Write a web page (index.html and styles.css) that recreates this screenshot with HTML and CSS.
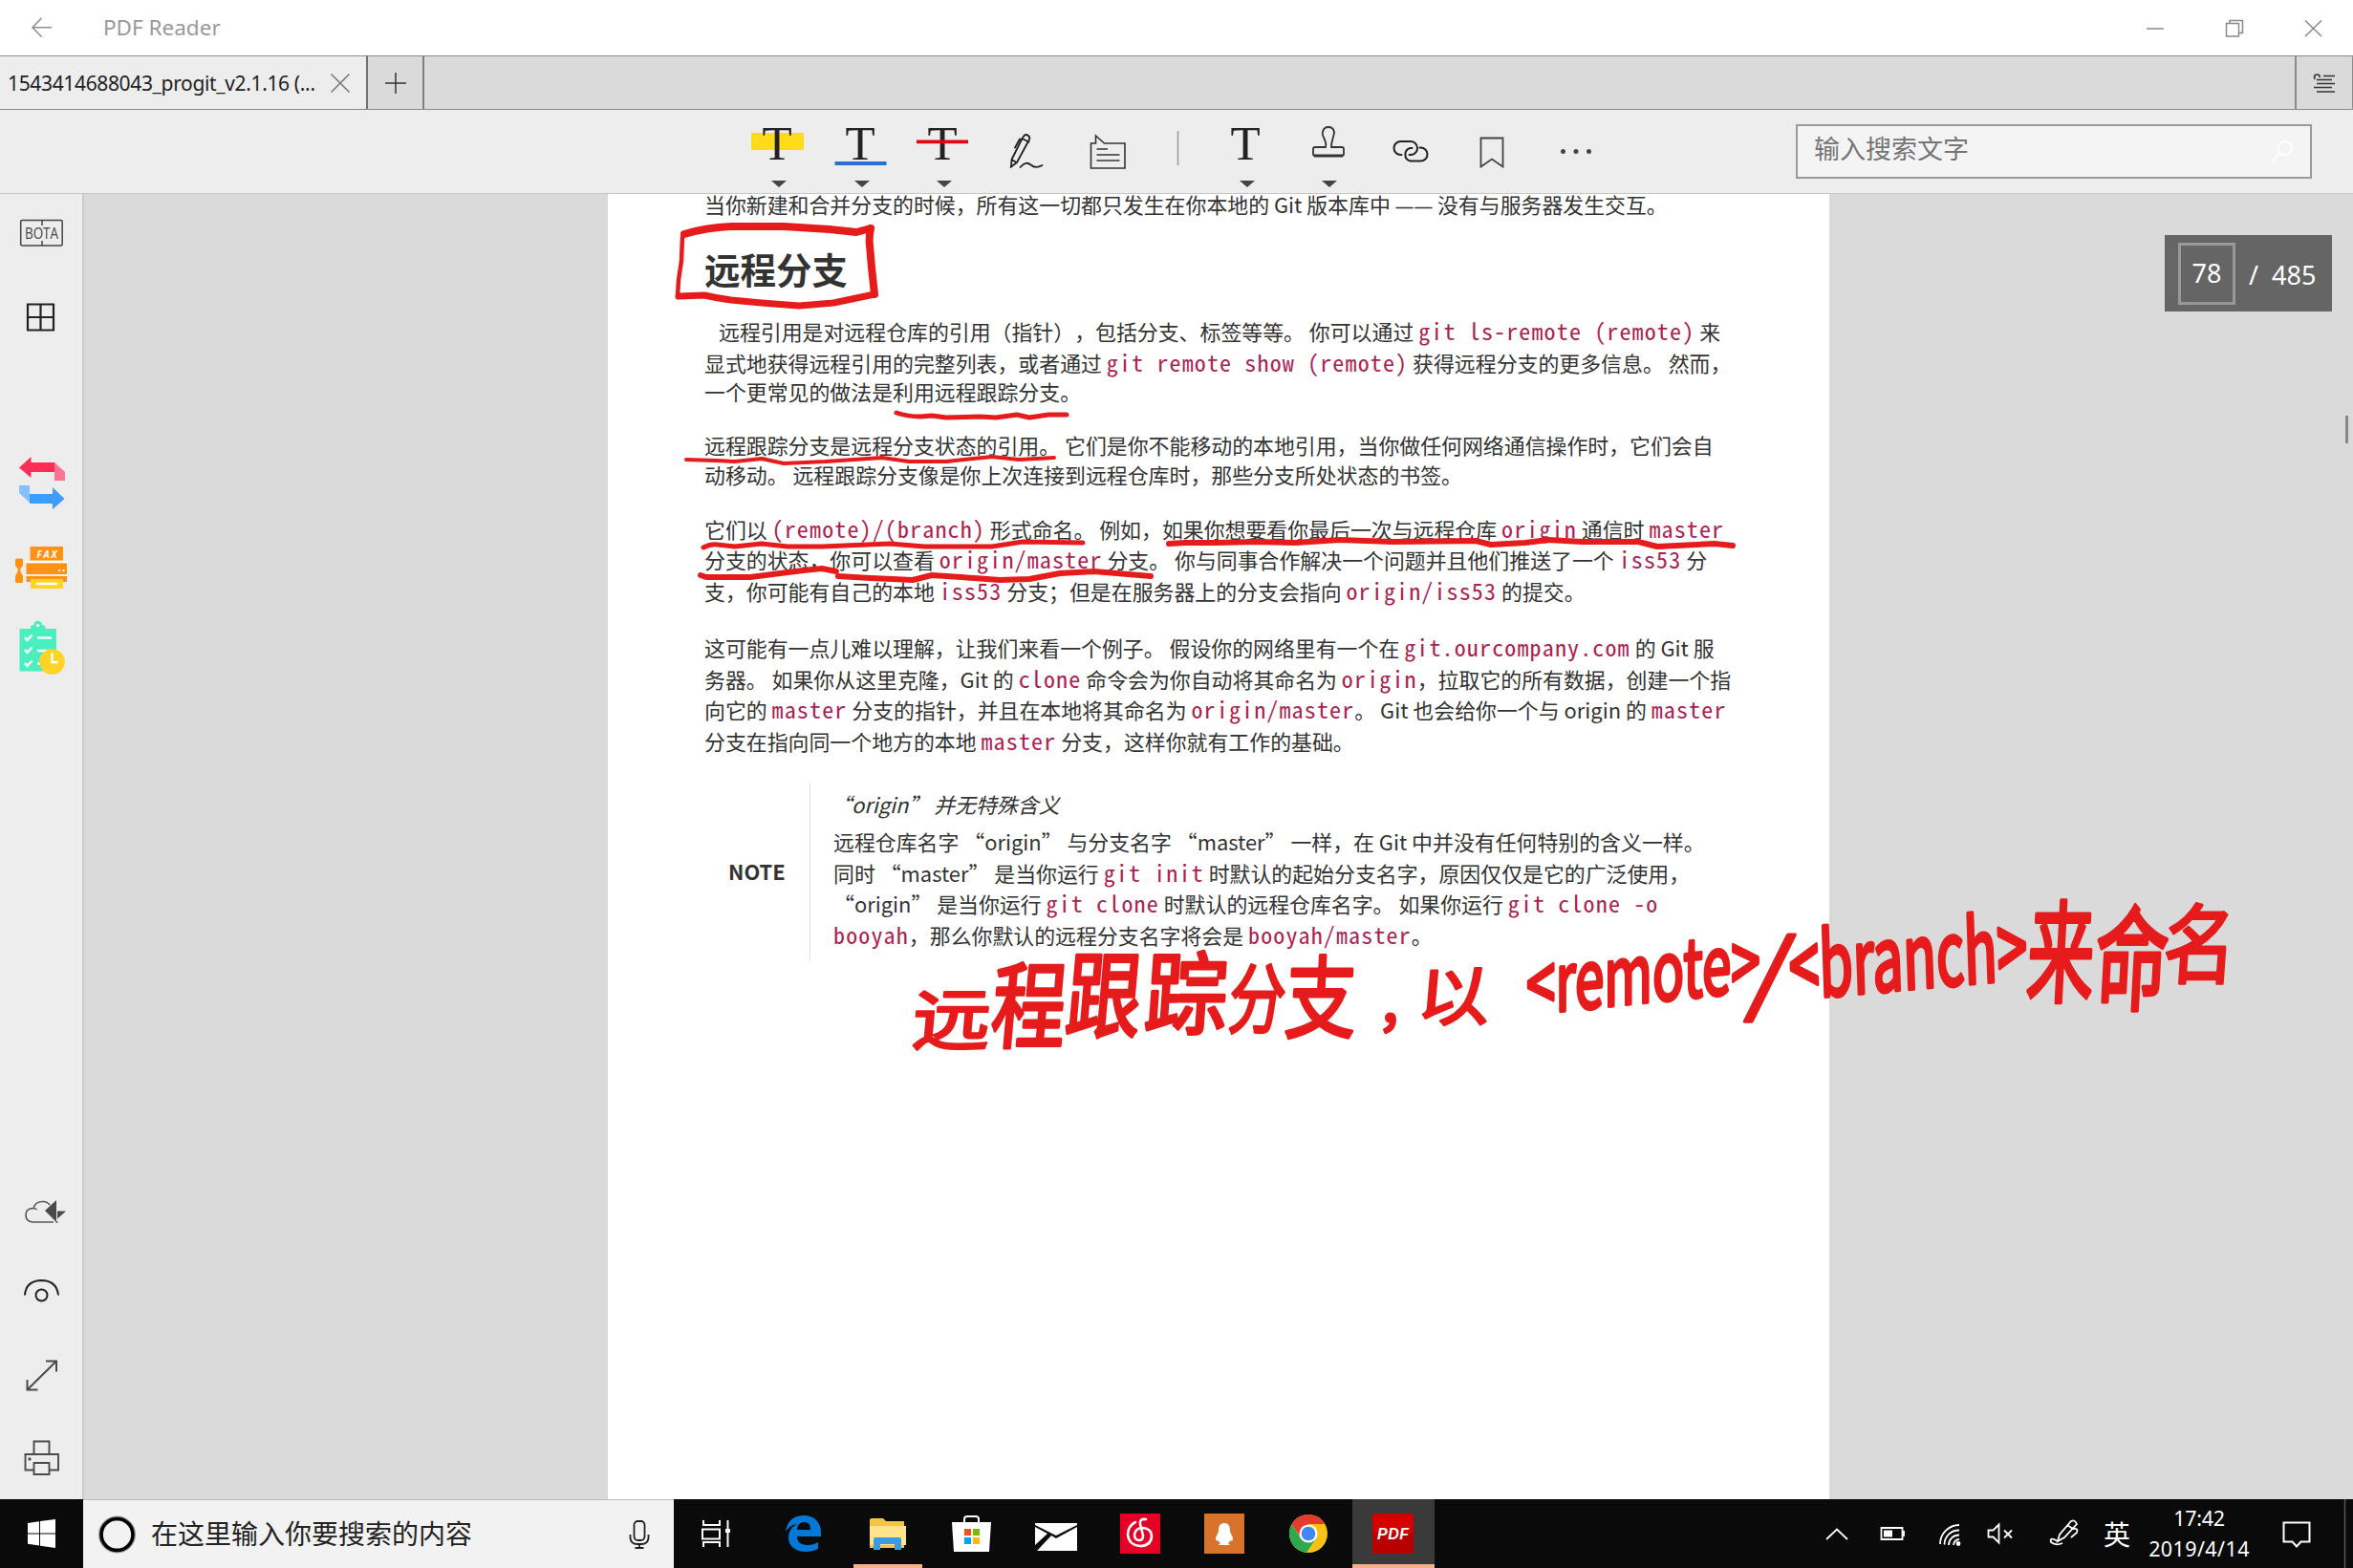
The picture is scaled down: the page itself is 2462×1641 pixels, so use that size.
FILE: index.html
```
<!DOCTYPE html>
<html lang="zh-CN">
<head>
<meta charset="utf-8">
<title>PDF Reader</title>
<link rel="stylesheet" href="styles.css">
</head>
<body>
<div class="app">
  <header class="titlebar">
    <svg class="back" viewBox="30 10 30 38" width="30" height="38"><path d="M54 28.7H34M43.500 19L34 28.700l9.500 9.700" fill="none" stroke="#8f8f8f" stroke-width="1.5"/></svg>
    <span class="app-name">PDF Reader</span>
    <svg class="winctl" viewBox="2213 0 249 57" width="249" height="57" fill="none" stroke="#8a8a8a" stroke-width="1.5"><path d="M2246 29h18M2329.500 23.500h13v13.500h-13zM2333 23.500v-3h13.500v13h-4M2412 20.500l17 16.500M2429 20.500l-17 16.500"/></svg>
  </header>

  <nav class="tabs">
    <div class="tab"><span class="tab-name">1543414688043_progit_v2.1.16 (...</span>
      <svg width="20" height="20" viewBox="0 0 20 20"><path d="M.5.5l19 19M19.500.5l-19 19" stroke="#777" stroke-width="1.500"/></svg></div>
    <div class="tab-add"><svg width="22" height="22" viewBox="0 0 22 22"><path d="M11 0v22M0 11h22" stroke="#333" stroke-width="1.500"/></svg></div>
    <div class="tab-menu"><svg width="24" height="22" viewBox="2419 77 24 22" fill="none" stroke="#333" stroke-width="1.700"><path d="M2421 84q-1.500-5 2.500-5q3 0 2.500 3M2430 80.500h12M2423 84.500h16M2423 88.500h19M2420 92.500h19M2423 97h19"/></svg></div>
  </nav>

  <div class="toolbar">
    <div class="tools">
      <svg class="tool" viewBox="770 115 86.500 86"><rect x="786" y="139" width="55" height="18" fill="#ffdb1a"/><text class="glyph" x="813" y="167">T</text><path class="caret" d="M807 189h16l-8 7z"/></svg>
      <svg class="tool" viewBox="856.500 115 86.500 86"><text class="glyph" x="899.500" y="167">T</text><rect x="873" y="169" width="54" height="4" fill="#2a6fd6"/><path class="caret" d="M893.500 189h16l-8 7z"/></svg>
      <svg class="tool" viewBox="943 115 86.500 86"><text class="glyph" x="986" y="167">T</text><rect x="959" y="146.500" width="54" height="3.700" fill="#e30613"/><path class="caret" d="M980 189h16l-8 7z"/></svg>
      <svg class="tool" viewBox="1029.500 115 86.500 86" fill="none" stroke="#222" stroke-width="1.800" stroke-linecap="round" stroke-linejoin="round"><path d="M1069 145l2-3q2-2 4.500 0q2 2 1 4l-13 24l-6 4.500l.5-7.500zM1069 145l7 3.500M1058 167l5 3M1068.500 146l-2-.500l-5 9M1057 175l1-2M1067 175q6-7 11-2.500t12 .5"/></svg>
      <svg class="tool" viewBox="1116 115 86.500 86" fill="none" stroke="#333" stroke-width="1.600"><path d="M1141.500 150h5v-8l9 8h21.500v26h-35.500zM1147.500 156h11.500M1147.500 162h24M1147.500 168h24"/></svg>
      <svg class="tool-sep" viewBox="1202.500 115 57 86"><path d="M1232 137v36" stroke="#999" stroke-width="1.500"/></svg>
      <svg class="tool" viewBox="1259.500 115 86.500 86"><text class="glyph" x="1302.500" y="167">T</text><path class="caret" d="M1296.500 189h16l-8 7z"/></svg>
      <svg class="tool" viewBox="1346 115 86.500 86" fill="none" stroke="#333" stroke-width="1.800"><path d="M1387 154q1-4-1.500-9t-1.500-7q1-5 6-5t6 5q0 2-1.500 7t-1.500 9h11q2 0 2 2v5q0 2-2 2h-28q-2 0-2-2v-5q0-2 2-2z"/><path d="M1375 163h30" stroke-width="3"/><path class="caret" d="M1383 189h16l-8 7z" stroke="none"/></svg>
      <svg class="tool" viewBox="1432.500 115 86.500 86" fill="none" stroke="#222" stroke-width="2" stroke-linecap="round"><path d="M1466 162h-1a6.500 6.500 0 0 1 0-14h10a7 7 0 0 1 1 14h-2M1477 155h-2a7 7 0 0 0 0 13.500h11a7 7 0 0 0 0-14h-1"/></svg>
      <svg class="tool" viewBox="1519 115 86.500 86" fill="none" stroke="#444" stroke-width="1.800"><path d="M1549.500 144.500h23v30l-11.500-8l-11.500 8z"/></svg>
      <svg class="tool" viewBox="1605.500 115 86.500 86" fill="#444"><circle cx="1635" cy="158.500" r="2.500"/><circle cx="1648.500" cy="158.500" r="2.500"/><circle cx="1662" cy="158.500" r="2.500"/></svg>
    </div>
    <div class="search"><span>输入搜索文字</span><svg width="26" height="26" viewBox="0 0 26 26" fill="none" stroke="#fff" stroke-width="1.700"><circle cx="16" cy="9" r="7.200"/><path d="M11 14L2 23"/></svg></div>
  </div>

  <main class="workspace">
    <aside class="sidebar">
      <svg width="87" height="84" viewBox="0 203 87 84"><rect x="21.700" y="230.500" width="43.500" height="26.500" rx="1.500" fill="none" stroke="#444" stroke-width="1.500"/><path d="M44 230v6M44 252v5" stroke="#444" stroke-width="1.500"/><text class="bota" x="26" y="250" textLength="35" lengthAdjust="spacingAndGlyphs">BOTA</text></svg>
      <svg width="87" height="89" viewBox="0 287 87 89"><path d="M29 318.500h27v27h-27zM42.500 318v28M28 332h28" fill="none" stroke="#222" stroke-width="2.200"/></svg>
      <svg class="first-action" width="87" height="86" viewBox="0 462 87 86"><path d="M20 489.500L32.500 478v6H57v10H32.500v6z" fill="#ff2d55"/><path d="M57 484l11 10v9H57z" fill="#ff7591"/><path d="M20 508h11v18L20 516z" fill="#85c0ff"/><path d="M31 517h24v-7l12.500 12L55 533v-6H31z" fill="#3e9cff"/></svg>
      <svg width="87" height="88" viewBox="0 548 87 88"><path d="M16 586q0-1.500 1.500-1.500h5q1.500 0 1.500 1.500v6l-2.500 3v3l2.500 5v6q0 1-1.500 1h-5q-1.500 0-1.500-1v-6l2.500-5v-3l-2.500-3z" fill="#ff9114"/><path d="M31.500 572H66v14.500H31.500z" fill="#ff9114"/><path d="M26 587h45v2H26z" fill="#fff"/><path d="M27.500 589.500H70v11.500H27.500zM27.500 603H70v6H27.500z" fill="#ff9114"/><path d="M32 606h34v10H32z" fill="#ffd426"/><path d="M38 611h22" stroke="#fff" stroke-width="2.500"/><path d="M61 597h2M65.500 597h2" stroke="#fff" stroke-width="2"/><text class="fax" x="38.500" y="583.500" textLength="21">FAX</text></svg>
      <svg width="87" height="86" viewBox="0 636 87 86"><path d="M20.500 658H32v-2.500q1-1.500 3.500-1.500a4.200 4.200 0 0 1 8.400 0q3 0 3.500 1.500v2.500h11.500v44.500H20.500z" fill="#4befbf"/><circle cx="39.600" cy="654.500" r="1.600" fill="#fff"/><path d="M26 667l2.500 3l5-5.500M26 680l2.500 3l5-5.500M26 694l2.500 3l5-5.500M39 667.500h15M39 681h12M39 694.500h4" fill="none" stroke="#fff" stroke-width="2.300"/><circle cx="54.500" cy="692.500" r="13.300" fill="#ffd426"/><path d="M54.500 683v10h6" fill="none" stroke="#fff" stroke-width="2.300"/></svg>
      <svg class="first-bottom" width="87" height="88" viewBox="0 1224 87 88" fill="none" stroke="#555" stroke-width="1.600"><path d="M56 1279H34q-7-.5-7-7.500t8-7q1.500-6.500 9-7q5-.5 8 3.500M35 1264.500q2 0 3.500 1.500"/><path d="M59 1256v23l-12-12z" fill="#4a4a4a" stroke="none"/><path d="M60 1267.500h9l-9 8z" fill="#4a4a4a" stroke="none"/><path d="M58.500 1279h2"/></svg>
      <svg width="87" height="84" viewBox="0 1312 87 84" fill="none" stroke="#222" stroke-width="2"><path d="M26 1355.500q1-15 17.500-15.500q16 .5 17.500 15.500"/><circle cx="43.500" cy="1355.500" r="6"/></svg>
      <svg width="87" height="86" viewBox="0 1396 87 86" fill="none" stroke="#4a4a4a" stroke-width="2"><path d="M48 1424.500h11v11M59 1424.500l-30.500 30M28.500 1444v10.500h11"/></svg>
      <svg width="87" height="87" viewBox="0 1482 87 87" fill="none" stroke="#4a4a4a" stroke-width="1.900"><path d="M35 1538.500h-8.500v-16.500h34.500v16.500h-9M35.500 1522v-13.500h16v13.500M35.500 1531h16v12h-16z"/><circle cx="31" cy="1527" r=".7"/></svg>
    </aside>

    <section class="canvas">
      <article class="page">
        <p class="ln first">当你新建和合并分支的时候，所有这一切都只发生在你本地的 Git 版本库中 <span class="dash">——</span> 没有与服务器发生交互。</p>
        <h2>远程分支</h2>
        <div class="para p1">
          <p class="ln indent">远程引用是对远程仓库的引用（指针），包括分支、标签等等。 你可以通过 <code>git ls-remote (remote)</code> 来</p>
          <p class="ln">显式地获得远程引用的完整列表，或者通过 <code>git remote show (remote)</code> 获得远程分支的更多信息。 然而，</p>
          <p class="ln plain">一个更常见的做法是利用远程跟踪分支。</p>
        </div>
        <div class="para p2">
          <p class="ln plain">远程跟踪分支是远程分支状态的引用。 它们是你不能移动的本地引用，当你做任何网络通信操作时，它们会自</p>
          <p class="ln plain">动移动。 远程跟踪分支像是你上次连接到远程仓库时，那些分支所处状态的书签。</p>
        </div>
        <div class="para p3">
          <p class="ln">它们以 <code>(remote)/(branch)</code> 形式命名。 例如，如果你想要看你最后一次与远程仓库 <code>origin</code> 通信时 <code>master</code></p>
          <p class="ln">分支的状态，你可以查看 <code>origin/master</code> 分支。 你与同事合作解决一个问题并且他们推送了一个 <code>iss53</code> 分</p>
          <p class="ln">支，你可能有自己的本地 <code>iss53</code> 分支；但是在服务器上的分支会指向 <code>origin/iss53</code> 的提交。</p>
        </div>
        <div class="para p4">
          <p class="ln">这可能有一点儿难以理解，让我们来看一个例子。 假设你的网络里有一个在 <code>git.ourcompany.com</code> 的 Git 服</p>
          <p class="ln">务器。 如果你从这里克隆，Git 的 <code>clone</code> 命令会为你自动将其命名为 <code>origin</code>，拉取它的所有数据，创建一个指</p>
          <p class="ln">向它的 <code>master</code> 分支的指针，并且在本地将其命名为 <code>origin/master</code>。 Git 也会给你一个与 origin 的 <code>master</code></p>
          <p class="ln">分支在指向同一个地方的本地 <code>master</code> 分支，这样你就有工作的基础。</p>
        </div>
        <div class="note">
          <div class="note-label">NOTE</div>
          <div class="note-body">
            <p class="ln note-title">“origin” 并无特殊含义</p>
            <p class="ln">远程仓库名字 “origin” 与分支名字 “master” 一样，在 Git 中并没有任何特别的含义一样。</p>
            <p class="ln">同时 “master” 是当你运行 <code>git init</code> 时默认的起始分支名字，原因仅仅是它的广泛使用，</p>
            <p class="ln">“origin” 是当你运行 <code>git clone</code> 时默认的远程仓库名字。 如果你运行 <code>git clone -o</code></p>
            <p class="ln"><code>booyah</code>，那么你默认的远程分支名字将会是 <code>booyah/master</code>。</p>
          </div>
        </div>
      </article>
      <div class="pager"><span class="pager-cur">78</span><span class="pager-sl">/</span><span class="pager-all">485</span></div>
      <div class="scroll-thumb"></div>
    </section>
  </main>

  <footer class="taskbar">
    <svg width="87" height="72" viewBox="0 1569 87 72" fill="#fff"><path d="M29 1594l12-1.800v12.300H29zM42 1592l16-2v14.500H42zM29 1605.500h12v12l-12-1.800zM42 1605.500h16v14.500l-16-2.300z"/></svg>
    <div class="cortana">
      <svg width="71" height="72" viewBox="87 1569 71 72"><circle cx="122.500" cy="1605" r="17" fill="none" stroke="#999" stroke-width="5"/><circle cx="122.500" cy="1605" r="16.500" fill="none" stroke="#000" stroke-width="3.500"/></svg>
      <span>在这里输入你要搜索的内容</span>
      <svg class="mic" width="40" height="72" viewBox="649 1569 40 72" fill="none" stroke="#222" stroke-width="1.800"><rect x="663.500" y="1591" width="11" height="20" rx="4"/><path d="M659.500 1605v4q1 6 7 6h5q6 0 7-6v-4M669 1615v4M664.500 1619h9"/></svg>
    </div>
    <svg width="88" height="72" viewBox="705 1569 88 72" fill="none" stroke="#fff" stroke-width="2"><path d="M736 1591v5h17v-5M736 1619v-5h17v5M735 1600.500h18v10h-18zM761.500 1591v28"/><path d="M761.500 1600v4" stroke-width="5"/></svg>
    <svg width="92" height="72" viewBox="793 1569 92 72"><path d="M822 1603c2-12 9-17 19-17c12 0 18 8 18 18v4h-25c0 7 6 9 11 9c4 0 8-1 11-3v7c-4 2-8 3-13 3c-12 0-18-7-18-15c0-6 3-11 9-14c-3 0-8 2-12 8zM834 1601h14c0-5-2-8-6-8c-5 0-8 3-8 8z" fill="#0078d7"/></svg>
    <svg width="88" height="72" viewBox="885 1569 88 72"><path d="M910 1591q0-2 2-2h12l3 3h19v28h-36z" fill="#f5c445"/><path d="M910 1597h38v20h-38z" fill="#ffe38d"/><path d="M914 1622v-11q0-2 2-2h25q2 0 2 2v11h-7v-6h-15v6z" fill="#3b9be0"/><path d="M893 1637h72v4h-72z" fill="#f7b186"/></svg>
    <svg width="88" height="72" viewBox="973 1569 88 72"><path d="M1009 1593v-3q0-3 3-3h9q3 0 3 3v3" fill="none" stroke="#fff" stroke-width="2"/><path d="M996 1593h41l-2 31h-37z" fill="#fff"/><path d="M1009 1600h7v7h-7z" fill="#f25022"/><path d="M1018 1600h7v7h-7z" fill="#7fba00"/><path d="M1009 1609h7v7h-7z" fill="#00a4ef"/><path d="M1018 1609h7v7h-7z" fill="#ffb900"/></svg>
    <svg width="88" height="72" viewBox="1061 1569 88 72"><path d="M1083 1594h44v2l-22 11l-22-11zM1083 1598l13 7l-13 12zM1127 1598v25h-42l15-16l5 3z" fill="#fff"/></svg>
    <svg width="88" height="72" viewBox="1149 1569 88 72"><rect x="1172" y="1584" width="42" height="42" fill="#e60026"/><path d="M1199 1590q-7-1-6 5l3 12q0 5-4 5q-5 0-5-6q1-7 9-7q9 1 9 9q-1 10-12 10q-12-1-13-12q0-9 8-13" fill="none" stroke="#fff" stroke-width="2.600" stroke-linecap="round"/></svg>
    <svg width="88" height="72" viewBox="1237 1569 88 72"><rect x="1260" y="1584" width="42" height="42" fill="#d9722b"/><path d="M1281 1594c5 0 6 4 6 8c0 3 3 5 3 9q-1 3-3 1q0 2-2 3l2 2h-12l2-2q-2-1-2-3q-2 2-3-1c0-4 3-6 3-9c0-4 1-8 6-8z" fill="#fff"/></svg>
    <svg width="90" height="72" viewBox="1325 1569 90 72"><circle cx="1369" cy="1605" r="20" fill="#fbc116"/><path d="M1351.700 1595A20 20 0 0 0 1367 1625l10-15h-16z" fill="#2da94f"/><path d="M1351.700 1595A20 20 0 0 1 1386.300 1595H1369l-8 14z" fill="#e33b2e"/><circle cx="1369" cy="1605" r="9.500" fill="#fff"/><circle cx="1369" cy="1605" r="7.300" fill="#4285f4"/></svg>
    <svg class="active" width="86" height="72" viewBox="1415 1569 86 72"><rect x="1436" y="1584" width="43" height="42" rx="2" fill="#d40000"/><rect x="1436" y="1604" width="43" height="22" fill="#b80000"/><text class="pdf" x="1441" y="1611" textLength="33">PDF</text><path d="M1415 1637h86v4h-86z" fill="#f7b186"/></svg>
    <div class="tray">
      <svg width="288" height="72" viewBox="1900 1569 288 72" fill="none" stroke="#fff" stroke-width="1.800"><path d="M1911 1611l11-10.500l11 10.500"/><path d="M1968.500 1599h22v12h-22zM1992 1602v6"/><path d="M1971 1601.500h9v7h-9z" fill="#fff" stroke="none"/><path d="M2030 1616a20 20 0 0 1 20-20M2034.500 1616.500a15 15 0 0 1 15.500-15M2039 1617a10.500 10.500 0 0 1 11-10.500M2044 1617a6 6 0 0 1 6-6"/><circle cx="2049" cy="1615.500" r="1.500" fill="#fff"/><path d="M2080.500 1601.500h5l6-6v19l-6-6h-5zM2097 1601.500l8 8M2105 1601.500l-8 8"/><path d="M2153 1613l2-7l12-14q4-2 6 3l-13 14zM2163 1596l6 4q6-1 4 4l-6 5M2153 1613q-9-5-7 1q5 4 12 1"/></svg>
      <span class="ime">英</span>
      <div class="clock"><span>17:42</span><span class="date">2019/4/14</span></div>
      <svg width="99" height="72" viewBox="2363 1569 99 72" fill="none" stroke="#fff" stroke-width="2"><path d="M2389.500 1593.500h27v20h-9l-4.500 5l-4.500-5h-9z"/><path d="M2453.500 1569v72" stroke="#555" stroke-width="1.500"/></svg>
    </div>
  </footer>

  <svg class="ink" width="2462" height="1641" viewBox="0 0 2462 1641">
    <g stroke-width="8"><path d="M716 245Q740 238 765 237L820 237L868 240L896 243L911 239"/><path d="M911 239Q909 248 910 257L912 280L915 308"/></g>
    <path d="M714 248L713 273L710 293L709 310" stroke-width="4.500"/>
    <path d="M710 310L737 309Q750 312 765 314L797 317L836 320L872 317L915 308" stroke-width="7"/>
    <g stroke-width="5">
      <path d="M938 432Q950 436 963 436L975 435L990 437L1026 436L1042 437L1064 434L1077 437L1097 434L1116 434"/>
      <path d="M736 573Q744 569 751 570L769 572L797 569L824 572L860 572L931 569L967 572L1038 572L1070 567L1133 568"/>
    </g>
    <path d="M718 481L749 482L769 483L797 480L820 485L864 483L923 479L951 483L990 483L1038 478L1066 481L1103 479" stroke-width="4"/>
    <g stroke-width="6">
      <path d="M1223 569L1240 568L1272 568L1315 567L1355 568L1402 565L1457 567L1544 566L1560 570L1596 568L1620 565L1655 567L1714 567L1734 572L1794 569L1813 571"/>
      <path d="M733 602L739 604L785 604L840 597L860 595L875 598"/>
      <path d="M877 603L911 605L955 607L975 602L1006 604L1046 607L1077 606L1109 600L1145 598L1204 603"/>
    </g>
    <g class="hand">
      <text transform="translate(953 1093) skewX(-5) scale(1.02 .88)">远</text>
      <text transform="translate(1035 1089) skewX(-5) scale(.97 1.230)">程</text>
      <text transform="translate(1113 1078) skewX(-5) scale(.98 1.230)">跟</text>
      <text transform="translate(1196 1075) skewX(-4) scale(1.08 1.180)">踪</text>
      <text transform="translate(1283 1075) skewX(-6) scale(.74 1)">分</text>
      <text transform="translate(1343 1079) skewX(-3) scale(.93 1.180)">支</text>
      <text class="comma" x="1441" y="1074">，</text>
      <text transform="translate(1481 1067) skewX(-5) scale(.95 .84)">以</text>
      <text class="latin" transform="translate(1597 1062) rotate(-6) skewX(-6)" textLength="246" lengthAdjust="spacingAndGlyphs">&lt;remote&gt;</text>
      <text class="latin" transform="translate(1828 1052) skewX(-10) scale(1 1.100)" textLength="38" lengthAdjust="spacingAndGlyphs">/</text>
      <text class="latin" transform="translate(1873 1046) rotate(-5) skewX(-3) scale(1 1.100)" textLength="250" lengthAdjust="spacingAndGlyphs">&lt;branch&gt;</text>
      <text transform="translate(2119 1040) skewX(-3) scale(.88 1.450)">来</text>
      <text transform="translate(2190 1048) skewX(-3) scale(.96 1.480)">命</text>
      <text transform="translate(2262 1022) skewX(-4) scale(.94 1.130)">名</text>
    </g>
  </svg>
</div>
</body>
</html>
```
FILE: styles.css
```
* { box-sizing: border-box; }
body { margin: 0; font-family: "Noto Sans", "Noto Sans CJK SC", sans-serif; color: #333; }
p, h2 { margin: 0; }
svg { display: block; flex: none; }

.app { position: relative; width: 2462px; height: 1641px; overflow: hidden; display: flex; flex-direction: column; background: #dadada; }

.titlebar { height: 58px; display: flex; align-items: center; background: #fff; padding-left: 30px; }
.app-name { margin: -2px 0 0 48px; font-size: 22.5px; color: #999; }
.winctl { margin-left: auto; }

.tabs { height: 57px; display: flex; border: 1.5px solid #8b8b8b; border-left: 0; background: #dadada; }
.tab { width: 385px; display: flex; align-items: center; justify-content: space-between; padding: 0 17px 0 8px; background: #ededed; border-right: 2px solid #707070; }
.tab-name { font-size: 21px; letter-spacing: -.35px; color: #222; white-space: nowrap; }
.tab-add { width: 59px; display: flex; align-items: center; justify-content: center; border-right: 2px solid #808080; }
.tab-menu { margin-left: auto; width: 60px; display: flex; align-items: center; justify-content: center; border-left: 2px solid #8b8b8b; }

.toolbar { height: 88px; display: flex; align-items: flex-start; padding-left: 770px; background: #ededed; border-bottom: 1.5px solid #c8c8c8; }
.tools { display: flex; }
.tool { width: 86.5px; height: 86px; }
.tool-sep { width: 57px; height: 86px; }
.glyph { font-family: "Liberation Serif", serif; font-size: 51px; text-anchor: middle; fill: #222; stroke: none; }
.caret { fill: #444; }
.search { width: 540px; height: 57px; margin: 15px 43px 0 auto; display: flex; align-items: center; justify-content: space-between; padding: 0 16px 0 17px; background: #f4f4f4; border: 2px solid #999; }
.search span { font: 27px/50px "Noto Sans CJK SC", sans-serif; color: #757575; margin-top: -7px; }

.workspace { height: 1366px; display: flex; }
.sidebar { width: 88px; display: flex; flex-direction: column; background: #ededed; border-right: 2px solid #cbcbcb; }
.first-action { margin-top: 86px; }
.first-bottom { margin-top: auto; }
.bota { font: 15.5px "Open Sans", sans-serif; fill: #444; }
.fax { font: italic bold 10px "Noto Sans", sans-serif; fill: #fff; }

.canvas { position: relative; flex: 1; padding-left: 548px; overflow: hidden; }
.page { width: 1278px; height: 1366px; padding-left: 101px; background: #fff; overflow: hidden; font-family: "Noto Sans CJK SC", sans-serif; font-size: 21.9px; text-spacing-trim: space-all; }
.ln { height: 32.5px; line-height: 32.5px; white-space: nowrap; }
.ln.plain { height: 31px; line-height: 31px; }
.ln.first { height: 24px; line-height: 22px; }
.ln.indent { padding-left: 15px; }
.dash { font-family: "Open Sans", sans-serif; font-size: 19.7px; line-height: 0; }
code { font-family: "Noto Sans Mono CJK SC", "Liberation Mono", monospace; font-size: 24px; letter-spacing: 1.14px; line-height: 0; color: #ab2251; }
h2 { margin-top: 34px; height: 40px; line-height: 40px; font-size: 37.5px; font-weight: 700; }
.p1 { margin-top: 30px; }
.p1 .ln.plain { height: 27px; line-height: 27px; }
.p2 { margin-top: 26.5px; }
.p3 { margin-top: 26px; }
.p4 { margin-top: 27px; }
.note { margin-top: 27px; height: 187px; display: flex; }
.note-label { width: 111px; padding-left: 25px; line-height: 185px; font-weight: 700; border-right: 1.5px solid #e3e3e3; }
.note-body { padding: 7px 0 0 24px; }
.note-title { font-style: italic; margin: 0 0 6.5px -3px; }

.pager { position: absolute; left: 2177px; top: 43px; width: 175px; height: 80px; display: flex; align-items: center; padding-left: 14px; background: #656565; color: #fff; font-size: 27px; }
.pager-cur { width: 60px; height: 65px; border: 3px solid #999; text-align: center; line-height: 57px; }
.pager-sl { margin: 3px 0 0 14px; }
.pager-all { margin: 3px 0 0 14px; }
.scroll-thumb { position: absolute; left: 2366px; top: 232px; width: 3px; height: 29px; background: #888; }

.taskbar { height: 72px; display: flex; background: #0a0a0a; color: #fff; }
.cortana { width: 618px; display: flex; align-items: center; background: #f2f2f2; color: #222; border-top: 1px solid #bbb; }
.cortana span { font: 28px/60px "Noto Sans CJK SC", sans-serif; margin-top: -3px; }
.mic { margin-left: auto; margin-right: 16px; }
.active { background: #3a3a3a; }
.pdf { font: italic bold 16px "Liberation Sans", sans-serif; fill: #fff; }
.tray { margin-left: auto; display: flex; align-items: center; }
.ime { width: 54px; text-align: center; font: 28px/60px "Noto Sans CJK SC", sans-serif; }
.clock { width: 118px; margin-right: 3px; display: flex; flex-direction: column; align-items: center; font-size: 21.5px; line-height: 32px; letter-spacing: -.3px; }
.date { letter-spacing: .4px; }

.ink { position: absolute; left: 0; top: 0; pointer-events: none; fill: none; stroke: #e61b1b; stroke-linecap: round; stroke-linejoin: round; }
.hand { font: 80px "Noto Sans CJK SC", sans-serif; fill: #e61b1b; stroke-width: 3; }
.hand .comma { font-size: 56px; }
.hand .latin { font-size: 84px; stroke-width: 4; }
```
